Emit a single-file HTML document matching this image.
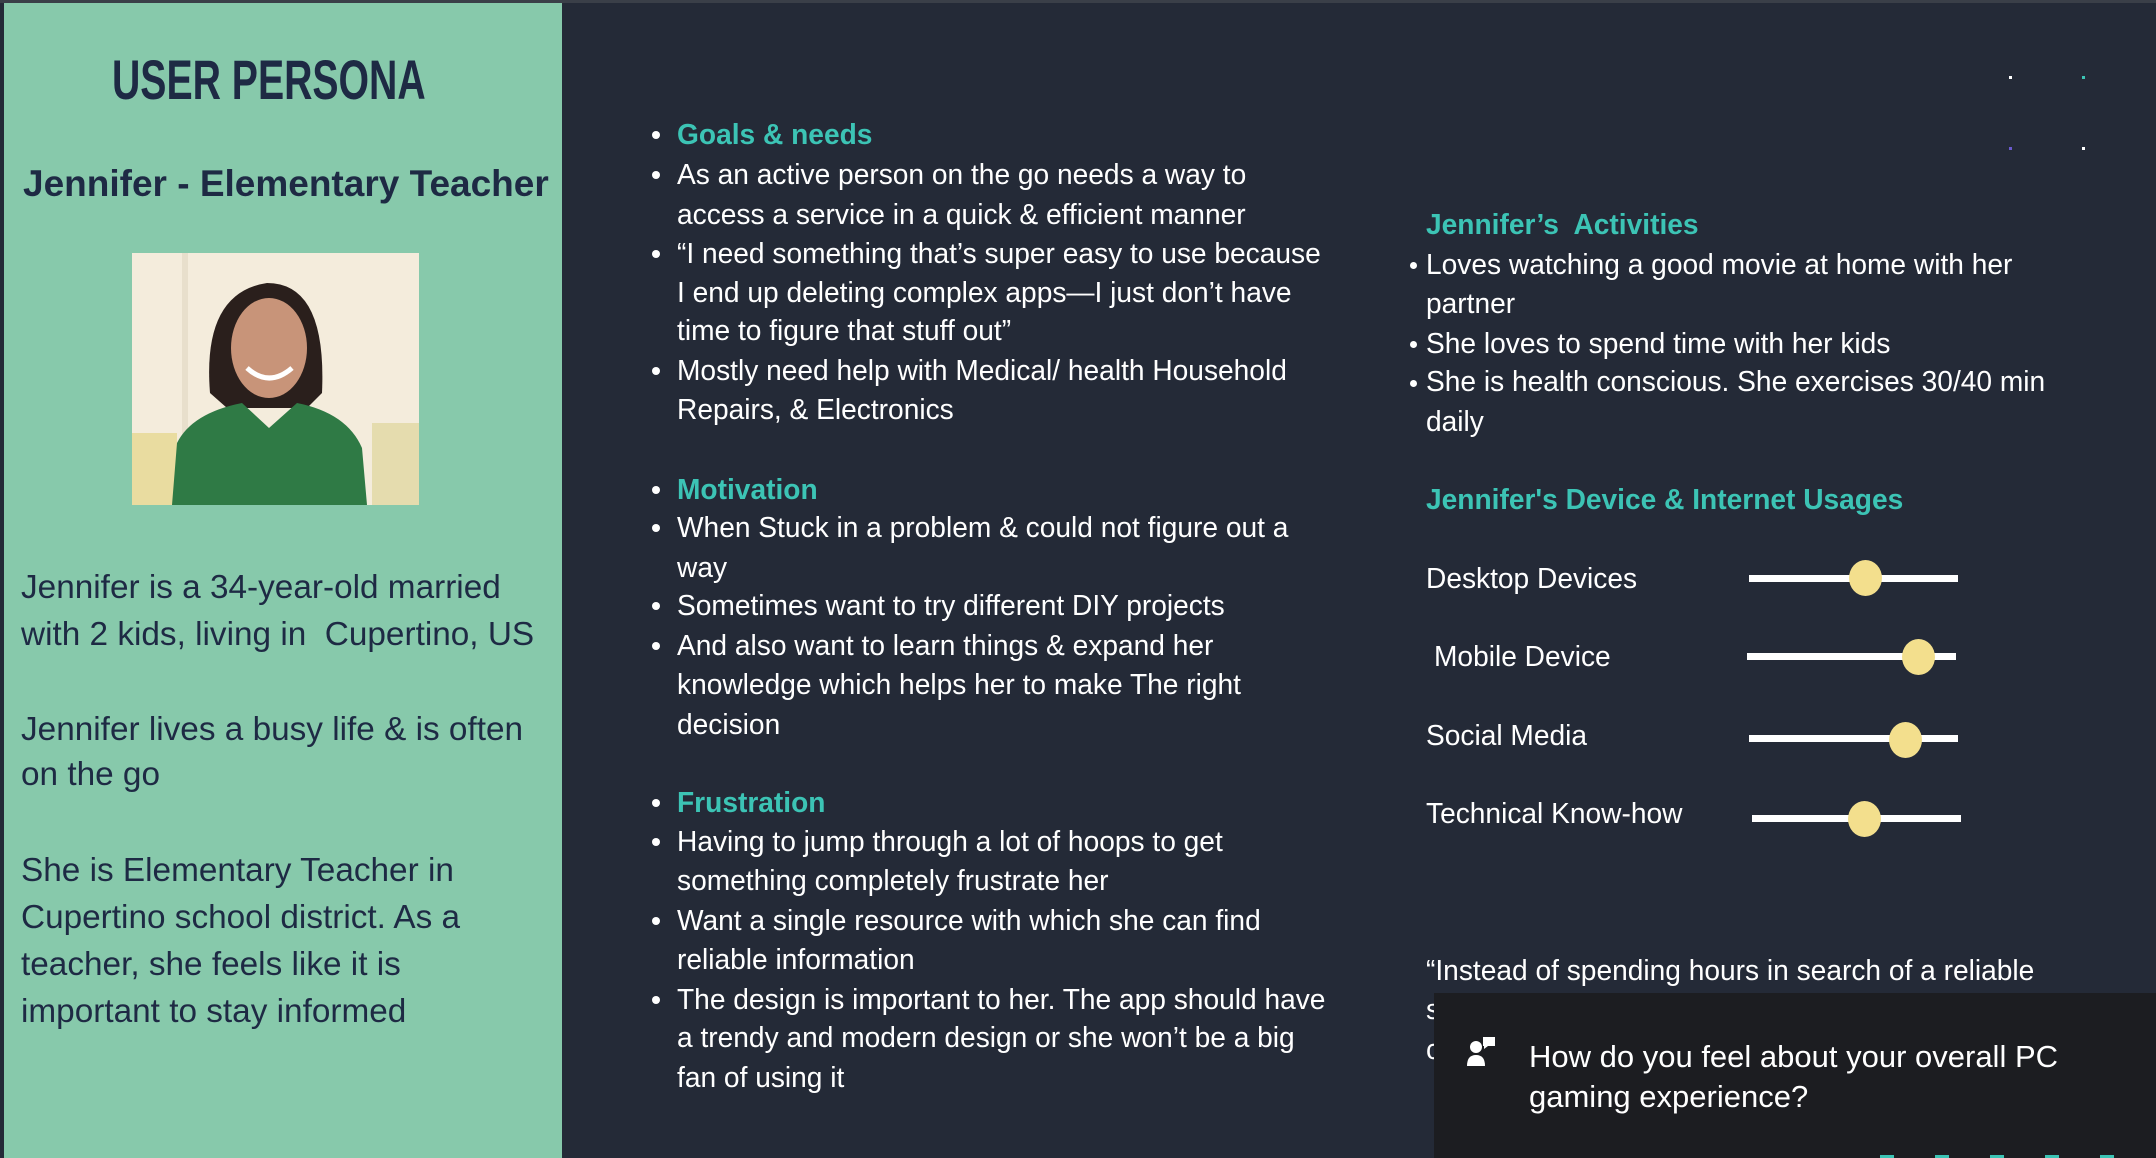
<!DOCTYPE html>
<html><head><meta charset="utf-8"><style>
*{margin:0;padding:0;box-sizing:border-box}
body{width:2156px;height:1158px;background:#242a37;position:relative;overflow:hidden;font-family:"Liberation Sans",sans-serif;color:#fff}
.t{position:absolute;white-space:nowrap;line-height:1;transform-origin:0 50%;transform:scaleX(.97)}
.m{font-size:29px}
.h{color:#3cc4b5;font-weight:bold}
.l{font-size:33px;color:#1e2a44;transform:scaleX(1.01)}
.b{position:absolute;width:8px;height:8px;border-radius:50%;background:#fff}
.track{position:absolute;height:7px;background:#fff;width:209px}
.knob{position:absolute;width:33px;height:36px;border-radius:50%;background:#f3df8d}
.dot{position:absolute;width:3px;height:3px;background:#fff}
</style></head><body>
<div style="position:absolute;left:0;top:0;width:2156px;height:3px;background:#3a3f48"></div>
<div style="position:absolute;left:4px;top:3px;width:558px;height:1155px;background:#87c9ab"></div>

<div class="t" style="left:112px;top:52px;font-size:56px;font-weight:bold;font-family:'Liberation Sans Narrow','Liberation Sans',sans-serif;color:#1e2a44;transform:scaleX(.70)">USER PERSONA</div>
<div class="t" style="left:23px;top:165px;font-size:37px;font-weight:bold;color:#1e2a44;transform:scaleX(1)">Jennifer - Elementary Teacher</div>

<svg style="position:absolute;left:132px;top:253px" width="287" height="252" viewBox="0 0 287 252">
<rect width="287" height="252" fill="#f4ecdc"/>
<rect x="50" y="0" width="6" height="252" fill="#e8dfcc"/>
<rect x="0" y="180" width="45" height="72" fill="#e9dca0"/>
<rect x="240" y="170" width="47" height="82" fill="#e5dcae"/>
<path d="M78 140 Q70 40 135 30 Q195 30 190 140 L175 155 L95 155 Z" fill="#2a1f1c"/>
<ellipse cx="137" cy="95" rx="38" ry="50" fill="#c89479"/>
<path d="M115 115 Q137 135 160 115" stroke="#fff" stroke-width="5" fill="none"/>
<path d="M40 252 L45 190 Q60 160 110 150 L137 175 L165 150 Q215 160 230 195 L235 252 Z" fill="#2f7a45"/>
</svg>

<div class="t l" style="left:21px;top:570px">Jennifer is a 34-year-old married</div>
<div class="t l" style="left:21px;top:617px">with 2 kids, living in&nbsp; Cupertino, US</div>
<div class="t l" style="left:21px;top:712px">Jennifer lives a busy life &amp; is often</div>
<div class="t l" style="left:21px;top:757px">on the go</div>
<div class="t l" style="left:21px;top:853px">She is Elementary Teacher in</div>
<div class="t l" style="left:21px;top:900px">Cupertino school district. As a</div>
<div class="t l" style="left:21px;top:947px">teacher, she feels like it is</div>
<div class="t l" style="left:21px;top:994px">important to stay informed</div>

<div class="b" style="left:652px;top:131px"></div><div class="t m h" style="left:677px;top:121px">Goals &amp; needs</div>
<div class="b" style="left:652px;top:171px"></div><div class="t m" style="left:677px;top:161px">As an active person on the go needs a way to</div>
<div class="t m" style="left:677px;top:201px">access a service in a quick &amp; efficient manner</div>
<div class="b" style="left:652px;top:250px"></div><div class="t m" style="left:677px;top:240px">“I need something that’s super easy to use because</div>
<div class="t m" style="left:677px;top:279px">I end up deleting complex apps—I just don’t have</div>
<div class="t m" style="left:677px;top:317px">time to figure that stuff out”</div>
<div class="b" style="left:652px;top:367px"></div><div class="t m" style="left:677px;top:357px">Mostly need help with Medical/ health Household</div>
<div class="t m" style="left:677px;top:396px">Repairs, &amp; Electronics</div>

<div class="b" style="left:652px;top:486px"></div><div class="t m h" style="left:677px;top:476px">Motivation</div>
<div class="b" style="left:652px;top:524px"></div><div class="t m" style="left:677px;top:514px">When Stuck in a problem &amp; could not figure out a</div>
<div class="t m" style="left:677px;top:554px">way</div>
<div class="b" style="left:652px;top:602px"></div><div class="t m" style="left:677px;top:592px">Sometimes want to try different DIY projects</div>
<div class="b" style="left:652px;top:642px"></div><div class="t m" style="left:677px;top:632px">And also want to learn things &amp; expand her</div>
<div class="t m" style="left:677px;top:671px">knowledge which helps her to make The right</div>
<div class="t m" style="left:677px;top:711px">decision</div>

<div class="b" style="left:652px;top:799px"></div><div class="t m h" style="left:677px;top:789px">Frustration</div>
<div class="b" style="left:652px;top:838px"></div><div class="t m" style="left:677px;top:828px">Having to jump through a lot of hoops to get</div>
<div class="t m" style="left:677px;top:867px">something completely frustrate her</div>
<div class="b" style="left:652px;top:917px"></div><div class="t m" style="left:677px;top:907px">Want a single resource with which she can find</div>
<div class="t m" style="left:677px;top:946px">reliable information</div>
<div class="b" style="left:652px;top:996px"></div><div class="t m" style="left:677px;top:986px">The design is important to her. The app should have</div>
<div class="t m" style="left:677px;top:1024px">a trendy and modern design or she won’t be a big</div>
<div class="t m" style="left:677px;top:1064px">fan of using it</div>

<div class="dot" style="left:2009px;top:76px"></div>
<div class="dot" style="left:2082px;top:76px;background:#3cc4b5"></div>
<div class="dot" style="left:2009px;top:147px;background:#6a5acd"></div>
<div class="dot" style="left:2082px;top:147px"></div>

<div class="t m h" style="left:1426px;top:211px">Jennifer’s&nbsp; Activities</div>
<div class="b" style="left:1410px;top:262px;width:7px;height:7px"></div><div class="t m" style="left:1426px;top:251px">Loves watching a good movie at home with her</div>
<div class="t m" style="left:1426px;top:290px">partner</div>
<div class="b" style="left:1410px;top:341px;width:7px;height:7px"></div><div class="t m" style="left:1426px;top:330px">She loves to spend time with her kids</div>
<div class="b" style="left:1410px;top:380px;width:7px;height:7px"></div><div class="t m" style="left:1426px;top:368px">She is health conscious. She exercises 30/40 min</div>
<div class="t m" style="left:1426px;top:408px">daily</div>
<div class="t m h" style="left:1426px;top:486px">Jennifer's Device &amp; Internet Usages</div>

<div class="t m" style="left:1426px;top:565px">Desktop Devices</div>
<div class="track" style="left:1749px;top:575px"></div><div class="knob" style="left:1849px;top:560px"></div>
<div class="t m" style="left:1434px;top:643px">Mobile Device</div>
<div class="track" style="left:1747px;top:653px"></div><div class="knob" style="left:1902px;top:639px"></div>
<div class="t m" style="left:1426px;top:722px">Social Media</div>
<div class="track" style="left:1749px;top:735px"></div><div class="knob" style="left:1889px;top:722px"></div>
<div class="t m" style="left:1426px;top:800px">Technical Know-how</div>
<div class="track" style="left:1752px;top:815px"></div><div class="knob" style="left:1848px;top:801px"></div>

<div class="t m" style="left:1426px;top:957px">“Instead of spending hours in search of a reliable</div>
<div class="t m" style="left:1426px;top:996px">s</div>
<div class="t m" style="left:1426px;top:1036px">c</div>

<div style="position:absolute;left:1434px;top:993px;width:722px;height:165px;background:#1c1d21"></div>
<svg style="position:absolute;left:1466px;top:1036px" width="32" height="32" viewBox="0 0 32 32">
<circle cx="10" cy="11" r="6" fill="#fff"/>
<path d="M1 30 Q1 19 10 19 Q19 19 19 30 Z" fill="#fff"/>
<path d="M17 1 H29 V10 H22 L18 13 V10 H17 Z" fill="#fff"/>
</svg>
<div class="t" style="left:1529px;top:1041px;font-size:31px;transform:scaleX(1)">How do you feel about your overall PC</div>
<div class="t" style="left:1529px;top:1081px;font-size:31px;transform:scaleX(1)">gaming experience?</div>
<div style="position:absolute;left:1880px;top:1155px;width:14px;height:3px;background:#3cc4b5"></div>
<div style="position:absolute;left:1935px;top:1155px;width:14px;height:3px;background:#3cc4b5"></div>
<div style="position:absolute;left:1990px;top:1155px;width:14px;height:3px;background:#3cc4b5"></div>
<div style="position:absolute;left:2045px;top:1155px;width:14px;height:3px;background:#3cc4b5"></div>
<div style="position:absolute;left:2100px;top:1155px;width:14px;height:3px;background:#3cc4b5"></div>
</body></html>
